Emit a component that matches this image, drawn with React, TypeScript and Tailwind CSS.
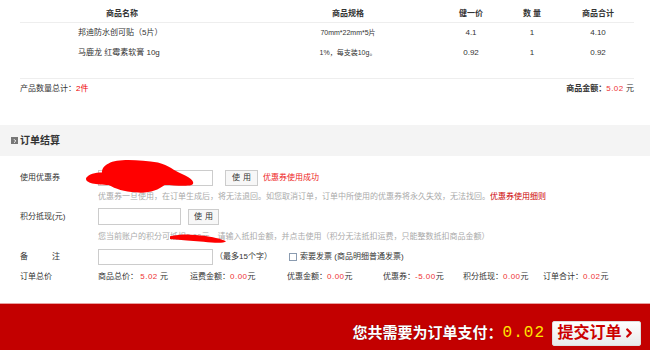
import { ChevronRight } from 'lucide-react';

const rows = [
  { name: '邦迪防水创可贴（5片）', spec: '70mm*22mm*5片', price: '4.1', qty: '1', total: '4.10' },
  { name: '马鹿龙 红霉素软膏 10g', spec: '1%，每支装10g。', price: '0.92', qty: '1', total: '0.92' },
];

function Scribble({ className, d }: { className: string; d: string }) {
  return (
    <svg className={className} viewBox="0 0 100 40" preserveAspectRatio="none">
      <path d={d} fill="#f00" />
    </svg>
  );
}

function App() {
  return (
    <div className="relative w-[650px] h-[350px] overflow-hidden bg-white text-[8px] leading-[10px] text-[#333] font-['Liberation_Sans','Noto_Sans_CJK_SC',sans-serif]">
      {/* goods table */}
      <div className="mx-[20px] w-[614px]">
        <div className="grid grid-cols-[204px_216px_62px_60px_72px] h-[23px] items-center pt-[6px] border-b border-[#eee] font-bold">
          <div className="text-center">商品名称</div>
          <div className="text-center pl-[32px]">商品规格</div>
          <div className="text-center">健一价</div>
          <div className="text-center">数 量</div>
          <div className="text-center">商品合计</div>
        </div>
        {rows.map((r) => (
          <div key={r.name} className="grid grid-cols-[204px_216px_62px_60px_72px] h-[20px] items-center text-[#333]">
            <div className="pl-[58px]">{r.name}</div>
            <div className="text-center pl-[32px] text-[7px]">{r.spec}</div>
            <div className="text-center">{r.price}</div>
            <div className="text-center">{r.qty}</div>
            <div className="text-center">{r.total}</div>
          </div>
        ))}
        <div className="h-[16px] border-b border-[#eee]" />
        <div className="flex justify-between items-center h-[19px]">
          <div>
            产品数量总计：<span className="text-[#e00]">2件</span>
          </div>
          <div className="font-bold">
            商品金额：<span className="text-[#e33] font-normal tracking-[0.5px]">5.02</span>
            <span className="font-normal"> 元</span>
          </div>
        </div>
      </div>

      {/* section title */}
      <div className="mt-[27px] h-[31px] bg-[#f4f4f4] flex items-center pl-[11px] gap-[2px]">
        <span className="w-[7px] h-[7px] bg-[#777] flex items-center justify-center">
          <ChevronRight className="w-[6px] h-[6px] text-white" strokeWidth={4} />
        </span>
        <span className="text-[10px] font-bold">订单结算</span>
      </div>

      {/* form */}
      <div className="px-[20px] pt-[14px]">
        <div className="flex items-center h-[16px]">
          <div className="w-[78px]">使用优惠券</div>
          <div className="w-[115px] h-[16px] border border-[#ccc]" />
          <button className="ml-[12px] w-[33px] h-[16px] border border-[#ccc] bg-[#f7f7f7] tracking-[3px] pl-[3px]">使用</button>
          <span className="ml-[5px] text-[#e22]">优惠券使用成功</span>
        </div>
        <div className="h-[22px] flex items-center pl-[78px] text-[#aaa]">
          优惠券一旦使用，在订单生成后，将无法退回。如您取消订单，订单中所使用的优惠券将永久失效，无法找回。
          <span className="text-[#c00]">优惠券使用细则</span>
        </div>
        <div className="flex items-center h-[17px]">
          <div className="w-[78px]">积分抵现(元)</div>
          <div className="w-[83px] h-[17px] border border-[#ccc]" />
          <button className="ml-[7px] w-[31px] h-[16px] border border-[#ccc] bg-[#f7f7f7] tracking-[3px] pl-[3px]">使用</button>
        </div>
        <div className="h-[24px] flex items-center pl-[78px] text-[#aaa]">
          您当前账户的积分可抵扣0.00元，请输入抵扣金额，并点击使用（积分无法抵扣运费，只能整数抵扣商品金额）
        </div>
        <div className="flex items-center h-[16px]">
          <div className="w-[78px] flex">
            <span className="w-[32px]">备</span>
            <span>注</span>
          </div>
          <div className="w-[115px] h-[16px] border border-[#ccc]" />
          <span className="ml-[2px] w-[74px]">（最多15个字）</span>
          <span className="w-[8px] h-[8px] border border-[#8a9bb0] bg-white" />
          <span className="ml-[3px]">索要发票 (商品明细普通发票)</span>
        </div>
        <div className="flex items-center h-[24px]">
          <div className="w-[78px]">订单总价</div>
          <div className="w-[92px]">
            商品总价： <span className="text-[#e33] tracking-[0.5px]">5.02</span> 元
          </div>
          <div className="w-[97px]">
            运费金额：<span className="text-[#e33] tracking-[0.5px]">0.00</span>元
          </div>
          <div className="w-[96px]">
            优惠金额：<span className="text-[#e33] tracking-[0.5px]">0.00</span>元
          </div>
          <div className="w-[80px]">
            优惠券：<span className="text-[#e33] tracking-[0.5px]">-5.00</span>元
          </div>
          <div className="w-[80px]">
            积分抵现：<span className="text-[#e33] tracking-[0.5px]">0.00</span>元
          </div>
          <div>
            订单合计：<span className="text-[#e33] tracking-[0.5px]">0.02</span>元
          </div>
        </div>
      </div>

      {/* pay bar */}
      <div className="absolute left-0 bottom-0 w-full h-[47px] bg-[#c30000] border-t border-[#e8a0a0] flex items-center justify-end pr-[9px] pt-[12px]">
        <span className="text-white text-[15px] font-bold leading-[20px] [text-shadow:0_0_1px_#600]">您共需要为订单支付：</span>
        <span className="text-[#ffe600] text-[16px] leading-[20px] tracking-[1px] font-['Liberation_Mono',monospace] mr-[7px]">0.02</span>
        <button className="w-[89px] h-[25px] rounded-[2px] border border-[#ddd] bg-gradient-to-b from-white to-[#e9e9e9] flex items-center justify-center text-[#c00] text-[16px] font-bold leading-[20px]">
          提交订单
          <ChevronRight className="w-[14px] h-[14px]" strokeWidth={4} />
        </button>
      </div>

      {/* redaction scribbles */}
      <Scribble
        className="absolute left-[84px] top-[158px] w-[112px] h-[36px]"
        d="M22 6 C30 0 50 2 66 5 C76 8 80 14 88 18 C96 22 100 28 96 30 C90 32 80 30 72 30 C66 36 56 40 46 38 C36 38 28 34 22 30 C12 30 0 28 2 22 C4 18 10 16 16 16 C16 12 18 8 22 6 Z"
      />
      <Scribble
        className="absolute left-[170px] top-[233px] w-[56px] h-[11px]"
        d="M0 12 C20 2 40 4 60 10 C75 14 90 20 100 30 C96 38 80 36 60 32 C40 28 20 26 0 22 Z"
      />
    </div>
  );
}

export default App;
